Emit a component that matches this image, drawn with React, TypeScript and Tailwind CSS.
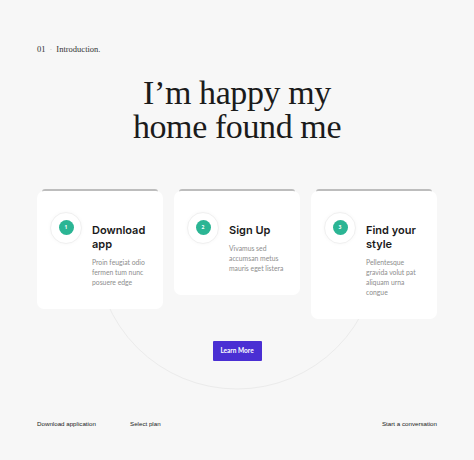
import React from 'react';

const steps = [
  { n: '1', title: ['Download', 'app'], text: ['Proin feugiat odio', 'fermen tum nunc', 'posuere edge'] },
  { n: '2', title: ['Sign Up'], text: ['Vivamus sed', 'accumsan metus', 'mauris eget listera'] },
  { n: '3', title: ['Find your', 'style'], text: ['Pellentesque', 'gravida volut pat', 'aliquam urna', 'congue'] },
];

function StepCard({ n, title, text }: { n: string; title: string[]; text: string[] }) {
  return (
    <div className="relative flex-1 pt-[2px]">
      {/* stacked sheet peeking over the card */}
      <div className="absolute left-[5px] right-[5px] top-0 h-[4px] rounded-t-[3px] bg-[#bdbdbd]" />
      <div className="relative flex gap-[10px] rounded-[7px] bg-white pl-[13px] pr-2 pt-[21px] pb-[22px]">
        <div className="flex h-[32px] w-[32px] shrink-0 items-center justify-center rounded-full border border-[#f0f0f0] bg-white shadow-[0_0_4px_rgba(0,0,0,0.03)]">
          <div className="flex h-[15px] w-[15px] items-center justify-center rounded-full bg-[#2bb594] text-[5px] font-bold text-white">
            {n}
          </div>
        </div>
        <div className="pt-[11px]">
          <h3 className="font-['Inter',sans-serif] text-[11px] font-semibold leading-[14px] text-[#1a1a1a]">
            {title.map((t) => (
              <div key={t}>{t}</div>
            ))}
          </h3>
          <p className="mt-[6px] font-['Lato',sans-serif] text-[6.8px] leading-[10px] text-[#8d8d8d]">
            {text.map((t) => (
              <span key={t} className="block">{t}</span>
            ))}
          </p>
        </div>
      </div>
    </div>
  );
}

export default function App() {
  return (
    <div className="relative h-[460px] w-[474px] overflow-hidden bg-[#f7f7f7]">
      {/* faint arc behind the cards */}
      <svg className="pointer-events-none absolute left-0 top-0" width="474" height="460">
        <path d="M 96 248 A 141 141 0 0 0 378 248" fill="none" stroke="#ebebeb" strokeWidth="1" />
      </svg>

      <div className="relative flex flex-col px-[37px] pt-[43px]">
        <div className="flex items-center gap-[4px] font-['Liberation_Serif',serif] text-[8.5px] text-[#333]">
          <span>01</span>
          <span className="text-[#bbb]">·</span>
          <span>Introduction.</span>
        </div>

        <h1 className="mt-[20px] text-center font-['Liberation_Serif',serif] text-[34px] leading-[34px] tracking-[-0.4px] text-[#1b1b1b]">
          I’m happy my
          <br />
          home found me
        </h1>

        <div className="mt-[45px] flex items-start gap-[11px]">
          {steps.map((s) => (
            <StepCard key={s.n} {...s} />
          ))}
        </div>

        <div className="mt-[22px] flex justify-center">
          <button className="h-[20px] w-[49px] rounded-[1px] bg-[#4a2fd3] font-['Lato',sans-serif] text-[6.5px] font-bold text-white">
            Learn More
          </button>
        </div>
      </div>

      <div className="absolute bottom-[32px] left-[37px] right-[37px] flex font-['Liberation_Sans',sans-serif] text-[6.2px] text-[#222]">
        <span className="w-[93px]">Download application</span>
        <span>Select plan</span>
        <span className="ml-auto">Start a conversation</span>
      </div>
    </div>
  );
}
